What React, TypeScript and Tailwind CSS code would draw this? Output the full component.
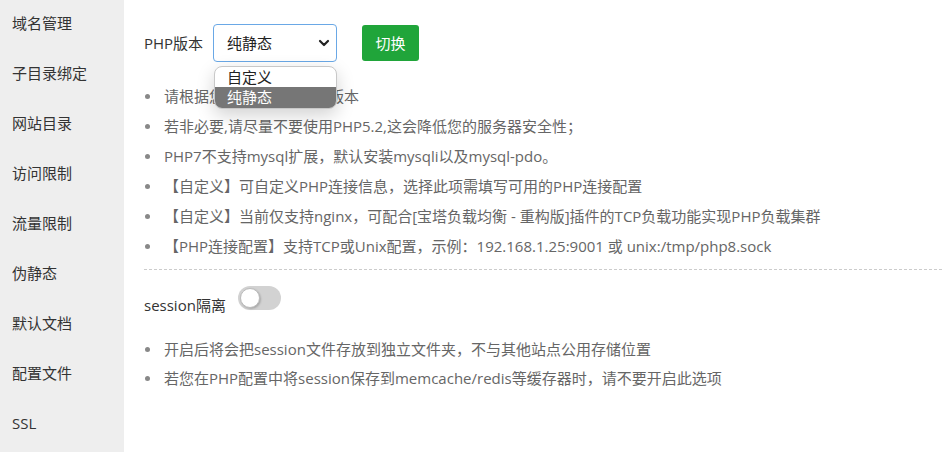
import React from "react";

const menu = ["域名管理", "子目录绑定", "网站目录", "访问限制", "流量限制", "伪静态", "默认文档", "配置文件", "SSL"];

const tips = [
  "请根据您的程序需求选择版本",
  "若非必要,请尽量不要使用PHP5.2,这会降低您的服务器安全性；",
  "PHP7不支持mysql扩展，默认安装mysqli以及mysql-pdo。",
  "【自定义】可自定义PHP连接信息，选择此项需填写可用的PHP连接配置",
  "【自定义】当前仅支持nginx，可配合[宝塔负载均衡 - 重构版]插件的TCP负载功能实现PHP负载集群",
  "【PHP连接配置】支持TCP或Unix配置，示例：192.168.1.25:9001 或 unix:/tmp/php8.sock",
];

const sessionTips = [
  "开启后将会把session文件存放到独立文件夹，不与其他站点公用存储位置",
  "若您在PHP配置中将session保存到memcache/redis等缓存器时，请不要开启此选项",
];

function TipList({ items, className, rowClass }: { items: string[]; className?: string; rowClass: string }) {
  return (
    <ul className={className}>
      {items.map((t) => (
        <li key={t} className={`flex items-center text-[15px] text-[#666] whitespace-nowrap ${rowClass}`}>
          <span className="w-[5px] h-[5px] rounded-full bg-[#888] ml-[1px] mr-[14px]" />
          {t}
        </li>
      ))}
    </ul>
  );
}

export default function App() {
  return (
    <div className="flex w-[948px] h-[452px] bg-white text-[#333] overflow-hidden font-['Open_Sans','Noto_Sans_CJK_SC',sans-serif]">
      {/* sidebar */}
      <div className="w-[124px] shrink-0 bg-[#eeeeee]">
        {menu.map((m) => (
          <div key={m} className="h-[50px] leading-[46px] pl-[12px] text-[15px] text-[#333]">
            {m}
          </div>
        ))}
      </div>

      {/* main */}
      <div className="flex-1 pl-[20px] pr-[6px] pt-[23px]">
        <div className="flex items-center h-[40px]">
          <span className="text-[15px] mr-[10px]">PHP版本</span>
          <div className="relative">
            <div className="flex items-center justify-between w-[124px] h-[38px] border border-[#6aa8e6] rounded-[4px] pl-[13px] pr-[6px] text-[15px] text-[#222]">
              纯静态
              <svg width="12" height="12" viewBox="0 0 12 12" fill="none">
                <path d="M2 4l4 4 4-4" stroke="#222" strokeWidth="2.2" strokeLinecap="round" strokeLinejoin="round" />
              </svg>
            </div>
            <div className="absolute left-[1px] top-[42px] w-[123px] z-10 bg-white border border-[#c8c8c8] rounded-[8px] overflow-hidden shadow-[0_6px_18px_rgba(0,0,0,0.18)] text-[15px]">
              <div className="h-[20px] leading-[20px] pl-[12px] text-[#222]">自定义</div>
              <div className="h-[21px] leading-[21px] pl-[12px] bg-[#767676] text-white">纯静态</div>
            </div>
          </div>
          <button className="ml-[25px] w-[57px] h-[36px] rounded-[3px] bg-[#20a53a] text-white text-[15px]">切换</button>
        </div>

        <TipList items={tips} className="mt-[18px]" rowClass="h-[30px]" />

        <div className="mt-[8px] border-t border-dashed border-[#ccc]" />

        <div className="flex items-start mt-[16px]">
          <span className="mt-[9px] leading-[20px] text-[15px]">session隔离</span>
          <div className="ml-[12px] w-[43px] h-[24px] rounded-full bg-[#d2d2d2] p-[2px]">
            <div className="w-[20px] h-[20px] rounded-full bg-white border border-[#bbb] shadow-[1px_1px_2px_rgba(0,0,0,0.2)]" />
          </div>
        </div>

        <TipList items={sessionTips} className="mt-[20px]" rowClass="h-[29px]" />
      </div>
    </div>
  );
}
